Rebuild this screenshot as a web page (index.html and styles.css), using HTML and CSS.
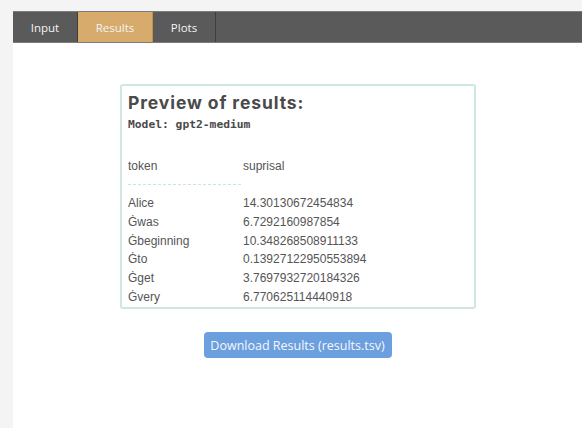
FILE: index.html
```html
<!DOCTYPE html>
<html>
<head>
<meta charset="utf-8">
<link rel="stylesheet" href="styles.css">
</head>
<body>
<div class="page">
  <nav class="tabs">
    <a class="tab">Input</a>
    <a class="tab active">Results</a>
    <a class="tab">Plots</a>
  </nav>
  <main class="content">
    <section class="card">
      <h2 class="title">Preview of results:</h2>
      <div class="model">Model: gpt2-medium</div>
      <table class="preview">
        <thead>
          <tr><th class="col-token">token</th><th>suprisal</th></tr>
          <tr class="rule-row"><td><div class="rule"></div></td><td></td></tr>
        </thead>
        <tbody>
          <tr><td>Alice</td><td>14.30130672454834</td></tr>
          <tr><td>Ġwas</td><td>6.7292160987854</td></tr>
          <tr><td>Ġbeginning</td><td>10.348268508911133</td></tr>
          <tr><td>Ġto</td><td>0.13927122950553894</td></tr>
          <tr><td>Ġget</td><td>3.7697932720184326</td></tr>
          <tr><td>Ġvery</td><td>6.770625114440918</td></tr>
        </tbody>
      </table>
    </section>
    <button class="download">Download Results (results.tsv)</button>
  </main>
</div>
</body>
</html>
```
FILE: styles.css
```css
html, body {
  margin: 0;
  padding: 0;
  background: #f4f4f4;
  height: 100%;
}

.page {
  margin-left: 13px;
  padding-top: 11px;
  min-height: 100%;
  box-sizing: border-box;
  display: flex;
  flex-direction: column;
}

.tabs {
  display: flex;
  height: 30px;
  background: #5a5a5a;
  border-top: 1px solid #7c7c7c;
  border-bottom: 1px solid #7c7c7c;
  font-family: "Open Sans", sans-serif;
  font-size: 11.5px;
}

.tab {
  display: flex;
  align-items: center;
  justify-content: center;
  color: #f4f4f4;
  border-right: 1px solid #3e3e3e;
  cursor: pointer;
}

.tab:nth-child(1) { width: 64px; }
.tab:nth-child(2) { width: 74px; }
.tab:nth-child(3) { width: 62px; }

.tab.active {
  background: #d6ab6b;
  border-right-color: #c2914c;
}

.content {
  flex: 1;
  background: #fff;
  display: flex;
  flex-direction: column;
  align-items: center;
  padding-top: 41px;
}

.card {
  width: 340px;
  border: 2px solid #cfe8df;
  border-radius: 3px;
  padding: 6px 6px 1px 6px;
  margin-left: 1px;
}

.title {
  margin: 0;
  font-family: "Inter", sans-serif;
  font-weight: 700;
  font-size: 17.5px;
  letter-spacing: 0.9px;
  line-height: 22px;
  color: #4a4a4a;
}

.model {
  margin-top: 4px;
  font-family: "DejaVu Sans Mono", monospace;
  font-weight: 700;
  font-size: 11.3px;
  line-height: 14px;
  color: #4a4a4a;
}

.preview {
  margin-top: 25px;
  border-collapse: collapse;
  font-family: "Liberation Sans", sans-serif;
  font-size: 12px;
  color: #555;
}

.preview th {
  font-weight: 400;
  text-align: left;
  padding: 0;
  height: 18px;
}

.preview td {
  padding: 0;
  height: 18.7px;
}

.col-token { width: 115px; }

.rule-row td { height: 19px; vertical-align: middle; }

.rule {
  width: 113px;
  border-top: 1px dashed #c8e6df;
}

.download {
  margin-top: 23px;
  width: 188px;
  height: 26px;
  background: #6c9fde;
  border: none;
  border-radius: 4px;
  color: #f4f8fd;
  font-family: "Open Sans", sans-serif;
  font-size: 12.5px;
  padding: 0;
}
```
